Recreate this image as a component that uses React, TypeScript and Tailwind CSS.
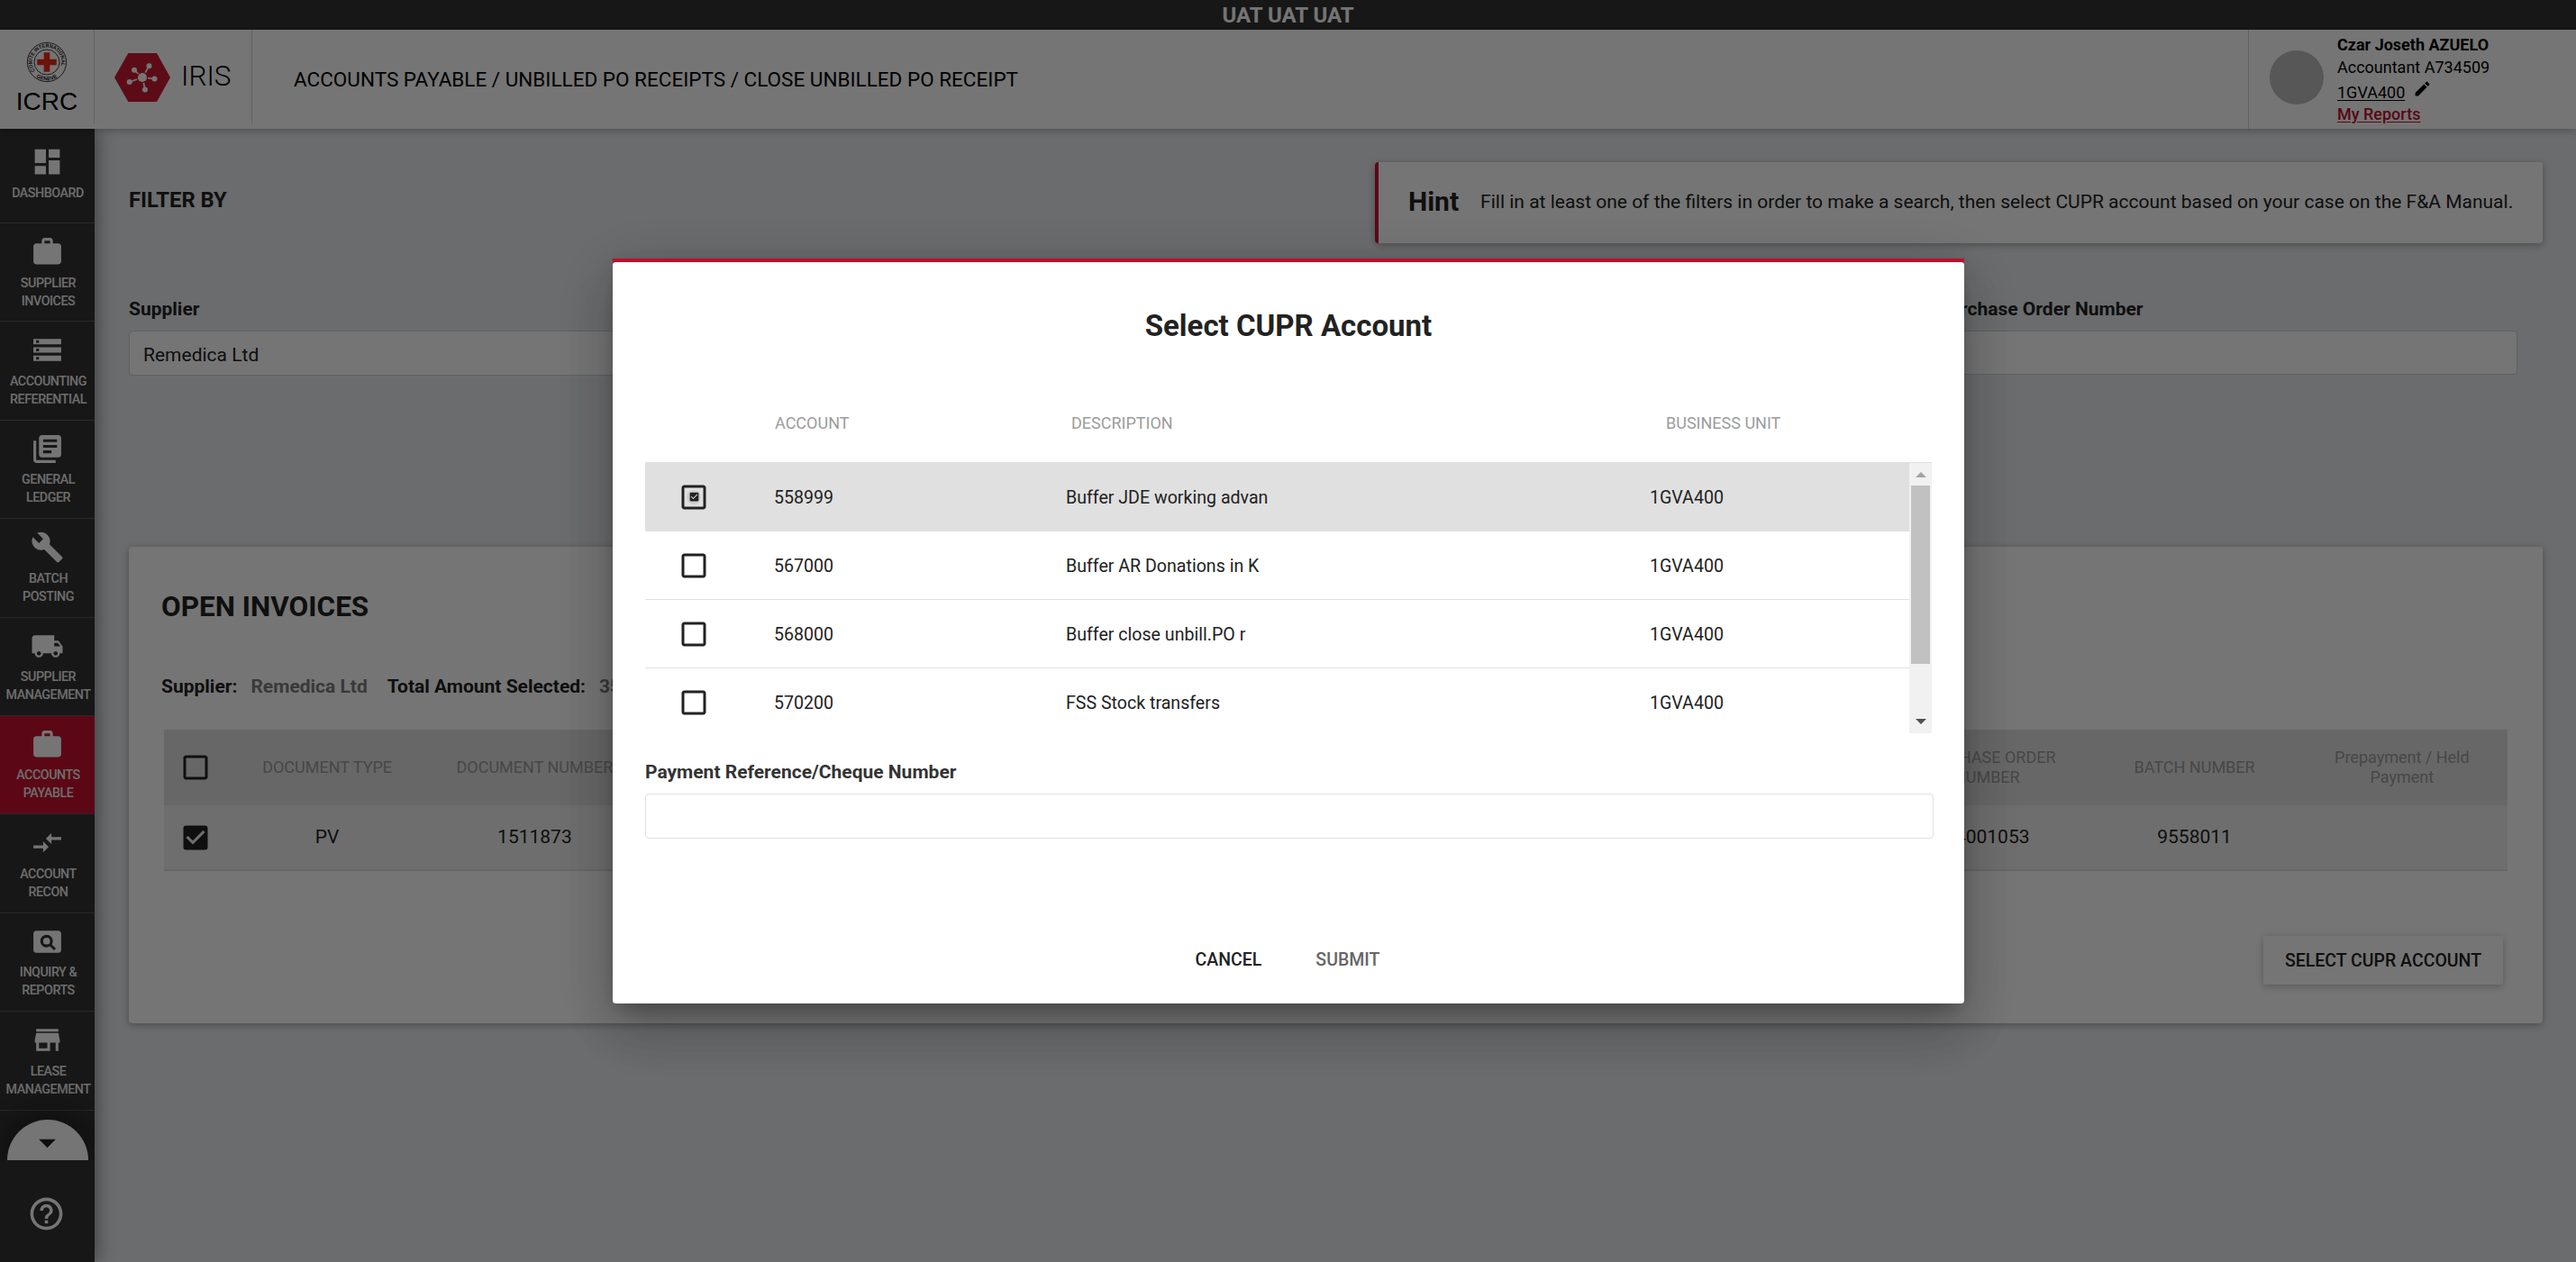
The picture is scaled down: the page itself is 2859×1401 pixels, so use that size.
import React from "react";
import type { IconType } from "react-icons";
import {
  MdArrowDropDown,
  MdBuild,
  MdCheckBox,
  MdCheckBoxOutlineBlank,
  MdCompareArrows,
  MdDashboard,
  MdEdit,
  MdHelpOutline,
  MdLibraryBooks,
  MdLocalShipping,
  MdPageview,
  MdStorage,
  MdStore,
  MdWork,
} from "react-icons/md";

type NavItem = { icon: IconType; lines: string[]; active?: boolean };

const NAV: NavItem[] = [
  { icon: MdWork, lines: ["SUPPLIER", "INVOICES"] },
  { icon: MdStorage, lines: ["ACCOUNTING", "REFERENTIAL"] },
  { icon: MdLibraryBooks, lines: ["GENERAL", "LEDGER"] },
  { icon: MdBuild, lines: ["BATCH", "POSTING"] },
  { icon: MdLocalShipping, lines: ["SUPPLIER", "MANAGEMENT"] },
  { icon: MdWork, lines: ["ACCOUNTS", "PAYABLE"], active: true },
  { icon: MdCompareArrows, lines: ["ACCOUNT", "RECON"] },
  { icon: MdPageview, lines: ["INQUIRY &", "REPORTS"] },
  { icon: MdStore, lines: ["LEASE", "MANAGEMENT"] },
];

const COLUMNS: { head: string[]; value: string }[] = [
  { head: ["DOCUMENT TYPE"], value: "PV" },
  { head: ["DOCUMENT NUMBER"], value: "1511873" },
  { head: [], value: "" },
  { head: [], value: "" },
  { head: [], value: "" },
  { head: [], value: "" },
  { head: [], value: "" },
  { head: [], value: "" },
  { head: ["PURCHASE ORDER", "NUMBER"], value: "14001053" },
  { head: ["BATCH NUMBER"], value: "9558011" },
  { head: ["Prepayment / Held", "Payment"], value: "" },
];

const ACCOUNTS = [
  { id: "558999", text: "Buffer JDE working advan", unit: "1GVA400", selected: true },
  { id: "567000", text: "Buffer AR Donations in K", unit: "1GVA400", selected: false },
  { id: "568000", text: "Buffer close unbill.PO r", unit: "1GVA400", selected: false },
  { id: "570200", text: "FSS Stock transfers", unit: "1GVA400", selected: false },
];

function Emblem() {
  return (
    <svg width="46" height="46" viewBox="-23 -23 46 46">
      <defs>
        <path id="ring-top" d="M -13.2 9.6 A 16.3 16.3 0 1 1 13.2 9.6" />
        <path id="ring-bottom" d="M -16 12.6 A 20.4 20.4 0 0 0 16 12.6" />
      </defs>
      <circle r="21.6" fill="#fff" stroke="#222" strokeWidth="0.9" />
      <circle r="14" fill="none" stroke="#222" strokeWidth="0.9" />
      <path d="M-3.3-10.8h6.6v7.5h7.5v6.6h-7.5v7.5h-6.6v-7.5h-7.5v-6.6h7.5z" fill="#f0281a" />
      <text fontFamily="Liberation Sans, sans-serif" fontSize="5.9" fontWeight="700" fill="#222">
        <textPath href="#ring-top" textLength="65" lengthAdjust="spacingAndGlyphs">
          COMITE INTERNATIONAL
        </textPath>
      </text>
      <text fontFamily="Liberation Sans, sans-serif" fontSize="5.9" fontWeight="700" fill="#222">
        <textPath href="#ring-bottom" startOffset="50%" textAnchor="middle">
          GENEVE
        </textPath>
      </text>
    </svg>
  );
}

function IrisMark() {
  const nodes = [
    [22, 18.7],
    [38.5, 14.3],
    [16.7, 32],
    [44.5, 28.5],
    [34, 40.5],
  ];
  return (
    <svg width="62" height="54" viewBox="0 0 62 54">
      <path d="M15.3 0H47L62 27 47 54H15.3L0 27z" fill="#cb1b33" />
      <circle cx="31" cy="27" r="5.1" fill="#fff" />
      {nodes.map(([x, y]) => {
        const d = Math.hypot(x - 31, y - 27);
        return (
          <g key={x}>
            <line
              x1={x}
              y1={y}
              x2={31 + ((x - 31) / d) * 6.2}
              y2={27 + ((y - 27) / d) * 6.2}
              stroke="#fff"
              strokeWidth="1.7"
            />
            <circle cx={x} cy={y} r="3" fill="#fff" />
          </g>
        );
      })}
    </svg>
  );
}

function Header() {
  return (
    <header className="relative z-20 flex h-[110px] shrink-0 bg-white text-black shadow-[0_2px_8px_rgba(0,0,0,0.25)]">
      <div className="flex h-[105px] w-[105px] flex-col items-center border-r border-[#d5d5d5] pt-[13px]">
        <Emblem />
        <span className="mt-[4px] font-['Liberation_Sans',sans-serif] text-[28px] leading-[34px]">ICRC</span>
      </div>
      <div className="flex h-[105px] w-[175px] border-r border-[#d5d5d5] pl-[22px] pt-[26px]">
        <IrisMark />
        <span className="ml-[12px] mt-[6px] text-[31.5px] font-light leading-[40px]">IRIS</span>
      </div>
      <div className="flex-1 pl-[46px] text-[22.5px] leading-[111px]">
        ACCOUNTS PAYABLE / UNBILLED PO RECEIPTS / CLOSE UNBILLED PO RECEIPT
      </div>
      <div className="flex w-[364px] border-l border-[#d5d5d5] pl-[23px]">
        <div className="mt-[23px] size-[60px] rounded-full bg-[#bdbdbd]" />
        <div className="ml-[15px] text-[18px]">
          <div className="mt-[4px] leading-[25px] font-bold">Czar Joseth AZUELO</div>
          <div className="leading-[25px]">Accountant A734509</div>
          <div className="flex">
            <span className="mt-[2px] leading-[27px] underline underline-offset-[2px]">1GVA400</span>
            <MdEdit className="ml-[9px] mt-px size-[21px]" />
          </div>
          <div className="leading-[22px] font-medium text-[#c20e2f] underline underline-offset-[2px]">My Reports</div>
        </div>
      </div>
    </header>
  );
}

function Sidebar() {
  return (
    <nav className="relative z-10 flex w-[105px] shrink-0 flex-col overflow-hidden bg-[#333] text-center text-[14.25px] font-medium leading-[20px] tracking-[-0.45px] text-[#eee] shadow-[3px_0_18px_rgba(0,0,0,0.4)]">
      <div className="flex h-[105px] flex-col items-center border-b border-[#5a5a5a] pt-[18px]">
        <MdDashboard className="size-[37px] text-white" />
        <span className="mt-[6px] pl-px">DASHBOARD</span>
      </div>
      {NAV.map(({ icon: Icon, lines, active }) => (
        <div
          key={lines.join()}
          className={
            active
              ? "flex h-[109.4px] flex-col items-center border-b border-[#5a5a5a] bg-[#c8102e] pt-[13px]"
              : "flex h-[109.4px] flex-col items-center border-b border-[#5a5a5a] pt-[13px]"
          }
        >
          <Icon className="size-[37px] text-white" />
          <span className="mt-[5.5px] pl-[2px]">{lines[0]}</span>
          <span className="pl-[2px]">{lines[1]}</span>
        </div>
      ))}
      <div className="flex h-[55px] items-end justify-center">
        <div className="flex h-[45px] w-[90px] justify-center rounded-t-full bg-white shadow-[0_0_45px_8px_rgba(0,0,0,0.4)]">
          <MdArrowDropDown className="mt-[3px] size-[45px] text-[#222]" />
        </div>
      </div>
      <div className="relative flex flex-1 bg-[#333] pl-[30px] pt-[38px]">
        <MdHelpOutline className="size-[43px] text-white" />
      </div>
    </nav>
  );
}

function OpenInvoices() {
  return (
    <section className="mt-[190px] h-[529px] rounded-[4px] bg-white pl-[36px] shadow-[0_2px_8px_rgba(0,0,0,0.3)]">
      <h2 className="pt-[47px] text-[31.5px] font-bold leading-[40px]">OPEN INVOICES</h2>
      <div className="mt-[53px] flex text-[21px] font-bold leading-[30px]">
        <span>Supplier:</span>
        <span className="ml-[15px] text-[#7d7d7d]">Remedica Ltd</span>
        <span className="ml-[22px]">Total Amount Selected:</span>
        <span className="ml-[15px] text-[#7d7d7d]">3500.00</span>
      </div>
      <div className="ml-[3px] mt-[33px] w-[2601px] text-center">
        <div className="grid h-[84px] grid-cols-[66px_repeat(11,1fr)] items-center bg-[#e0e0e0] pr-[2px] text-[18px] leading-[22px] text-[#9c9c9c]">
          <MdCheckBoxOutlineBlank className="ml-[17px] size-[36px] text-[#222]" />
          {COLUMNS.map((c, i) => (
            <div key={i}>
              {c.head.map((h) => (
                <div key={h}>{h}</div>
              ))}
            </div>
          ))}
        </div>
        <div className="grid h-[73px] grid-cols-[66px_repeat(11,1fr)] items-center border-b-2 border-[#e0e0e0] bg-[#f0f0f0] pr-[2px] pt-px text-[21px]">
          <MdCheckBox className="ml-[17px] size-[36px] text-[#222]" />
          {COLUMNS.map((c, i) => (
            <div key={i}>{c.value}</div>
          ))}
        </div>
      </div>
      <div className="mr-[44px] mt-[72px] flex justify-end">
        <button className="h-[54px] w-[266px] rounded-[3px] bg-white pt-px text-[19.5px] font-medium shadow-[0_2px_8px_rgba(0,0,0,0.25)]">
          SELECT CUPR ACCOUNT
        </button>
      </div>
    </section>
  );
}

function Main() {
  return (
    <main className="flex-1 bg-[#e9ebee] pl-[38px] pr-[37px] text-[#222]">
      <div className="mt-[37px] flex justify-between">
        <h2 className="text-[23.8px] font-bold leading-[84px]">FILTER BY</h2>
        <div className="flex h-[90px] w-[1296px] items-center rounded-[4px] border-l-4 border-[#c8102e] bg-white pl-[33px] shadow-[0_2px_8px_rgba(0,0,0,0.3)]">
          <span className="pb-[3px] text-[30px] font-bold">Hint</span>
          <span className="ml-[24px] whitespace-nowrap text-[21px]">
            Fill in at least one of the filters in order to make a search, then select CUPR account based on your case on the F&amp;A Manual.
          </span>
        </div>
      </div>
      <div className="mr-[28px] mt-[60px] grid grid-cols-4 gap-x-[26px] text-[21px]">
        <div>
          <div className="font-bold leading-[26px]">Supplier</div>
          <div className="mt-[11px] h-[50px] rounded-[4px] border border-[#cfd2d6] bg-white pl-[15px] leading-[52px]">
            Remedica Ltd
          </div>
        </div>
        <div className="col-start-4">
          <div className="font-bold leading-[26px]">Purchase Order Number</div>
          <div className="mt-[11px] h-[49px] rounded-[4px] border border-[#cfd2d6] bg-white" />
        </div>
      </div>
      <OpenInvoices />
    </main>
  );
}

function CuprDialog() {
  return (
    <div className="h-[827px] w-[1500px] shadow-[0_2px_20px_rgba(0,0,0,0.12),0_16px_22px_-10px_rgba(0,0,0,0.2),0_36px_57px_5px_rgba(0,0,0,0.14),0_14px_69px_12px_rgba(0,0,0,0.12)]">
      <div className="h-[4px] bg-[#c10d2d]" />
      <div className="h-[823px] rounded-[4px] bg-white px-[36px] pt-[51px] text-[#222]">
        <h1 className="text-center text-[33px] font-bold leading-[40px]">Select CUPR Account</h1>
        <div className="mt-[76px] grid h-[56px] grid-cols-[144px_329px_660px_1fr] border-b border-[#e0e0e0] text-[18px] leading-[24px] text-[#9c9c9c]">
          <span className="col-start-2">ACCOUNT</span>
          <span>DESCRIPTION</span>
          <span>BUSINESS UNIT</span>
        </div>
        <div className="flex h-[300px] overflow-hidden">
          <div className="flex-1">
            {ACCOUNTS.map((a) => (
              <div
                key={a.id}
                className={
                  a.selected
                    ? "grid h-[76px] grid-cols-[143px_324px_648px_1fr] items-center border-b border-[#e0e0e0] bg-[#e0e0e0] pt-[2px] text-[19.6px]"
                    : "grid h-[76px] grid-cols-[143px_324px_648px_1fr] items-center border-b border-[#e0e0e0] pt-[2px] text-[19.6px]"
                }
              >
                <div className="relative -mt-[2px] ml-[36px] size-[36px]">
                  <MdCheckBoxOutlineBlank className="size-[36px]" />
                  {a.selected && (
                    <span className="absolute inset-[10px] flex items-center justify-center rounded-full bg-[#cfcfd2]">
                      <MdCheckBox className="size-[13px] shrink-0" />
                    </span>
                  )}
                </div>
                <span>{a.id}</span>
                <span>{a.text}</span>
                <span>{a.unit}</span>
              </div>
            ))}
          </div>
          <div className="flex w-[25px] flex-col items-center bg-[#f1f1f1]">
            <svg className="mt-[10px]" width="12" height="6" viewBox="0 0 12 6">
              <path d="M0 6 6 0l6 6z" fill="#a3a3a3" />
            </svg>
            <div className="mt-[9px] h-[198px] w-[21px] bg-[#c1c1c1]" />
            <svg className="mt-[61px]" width="12" height="6" viewBox="0 0 12 6">
              <path d="M0 0h12L6 6z" fill="#505050" />
            </svg>
          </div>
        </div>
        <div className="mt-[30px] text-[21px] font-bold leading-[26px] text-[#333]">Payment Reference/Cheque Number</div>
        <div className="mt-[11px] h-[50px] w-[1430px] rounded-[4px] border border-[#e0e0e0] bg-white" />
        <div className="mr-[2px] mt-[120px] flex justify-center gap-[60px] text-[19.5px] font-medium leading-[30px]">
          <span>CANCEL</span>
          <span className="text-[#666]">SUBMIT</span>
        </div>
      </div>
    </div>
  );
}

export default function App() {
  return (
    <div className="relative flex h-[1401px] w-full flex-col overflow-hidden font-[Roboto,sans-serif]">
      <div className="h-[33px] shrink-0 bg-[#333] text-center text-[24px] font-bold leading-[34px] text-white">
        UAT UAT UAT
      </div>
      <Header />
      <div className="flex flex-1">
        <Sidebar />
        <Main />
      </div>
      <div className="fixed inset-0 z-30 flex items-center bg-black/54 pl-[680px]">
        <CuprDialog />
      </div>
    </div>
  );
}
